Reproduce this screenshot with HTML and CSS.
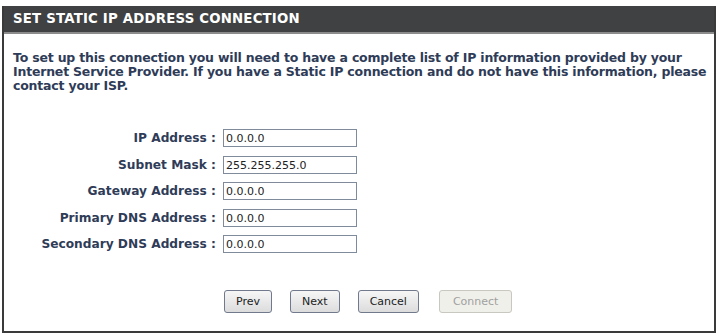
FILE: index.html
```html
<!DOCTYPE html>
<html lang="en">
<head>
    <meta charset="UTF-8">
    <title>Set Static IP Address Connection</title>
    <link rel="stylesheet" href="styles.css">
</head>
<body>
    <div class="box">
        <h2>SET STATIC IP ADDRESS CONNECTION</h2>
        <div class="box-body">
            <p class="intro">To set up this connection you will need to have a complete list of IP information provided by your Internet Service Provider. If you have a Static IP connection and do not have this information, please contact your ISP.</p>

            <div class="form-grid">
                <label for="ipaddr">IP Address :</label>
                <input type="text" id="ipaddr" value="0.0.0.0">
                <label for="netmask">Subnet Mask :</label>
                <input type="text" id="netmask" value="255.255.255.0">
                <label for="gateway">Gateway Address :</label>
                <input type="text" id="gateway" value="0.0.0.0">
                <label for="dns1">Primary DNS Address :</label>
                <input type="text" id="dns1" value="0.0.0.0">
                <label for="dns2">Secondary DNS Address :</label>
                <input type="text" id="dns2" value="0.0.0.0">
            </div>

            <div class="button-row">
                <button>Prev</button>
                <button>Next</button>
                <button>Cancel</button>
                <button disabled>Connect</button>
            </div>
        </div>
    </div>
</body>
</html>
```

FILE: styles.css
```css
body {
    margin: 0;
    padding: 6px 4px 0 2px;
    background-color: #fff;
    font-family: "DejaVu Sans", sans-serif;
}
.box {
    border: 2px solid #3a3a3a;
    border-top: none;
}
.box h2 {
    margin: 0;
    height: 26px;
    line-height: 26px;
    padding: 0 9px;
    background-color: #404142;
    border-bottom: 2px solid #8c8c8c;
    color: #fff;
    font-size: 13.3px;
    font-weight: bold;
    letter-spacing: 0.2px;
}
.box-body {
    padding: 17px 0 18px 9px;
}
.intro {
    margin: 0;
    font-size: 12.5px;
    line-height: 14px;
    font-weight: bold;
    letter-spacing: -0.2px;
    color: #2f3c58;
}
.form-grid {
    display: grid;
    grid-template-columns: 203px 134px;
    column-gap: 7px;
    row-gap: 8.5px;
    margin-top: 36px;
    align-items: center;
}
.form-grid label {
    text-align: right;
    font-size: 12.2px;
    font-weight: bold;
    color: #2f3c58;
}
.form-grid input {
    box-sizing: border-box;
    width: 134px;
    height: 18px;
    margin: 0;
    padding: 1px 2px 0 2px;
    border: 1px solid #7f8a9a;
    font-family: "DejaVu Sans", sans-serif;
    font-size: 11px;
    color: #222;
}
.button-row {
    display: flex;
    gap: 18px;
    margin-top: 37px;
    padding-left: 211px;
}
button {
    height: 23px;
    padding: 0 11px;
    border: 1px solid #707a8c;
    border-radius: 3px;
    background: linear-gradient(#f6f6f6, #dcdcdc);
    font-family: "DejaVu Sans", sans-serif;
    font-size: 11px;
    color: #222;
}
button:disabled {
    border-color: #c8c8c0;
    background: #f0f0ea;
    color: #a0a0a0;
    margin-left: 2px;
    padding: 0 13px;
}
```
